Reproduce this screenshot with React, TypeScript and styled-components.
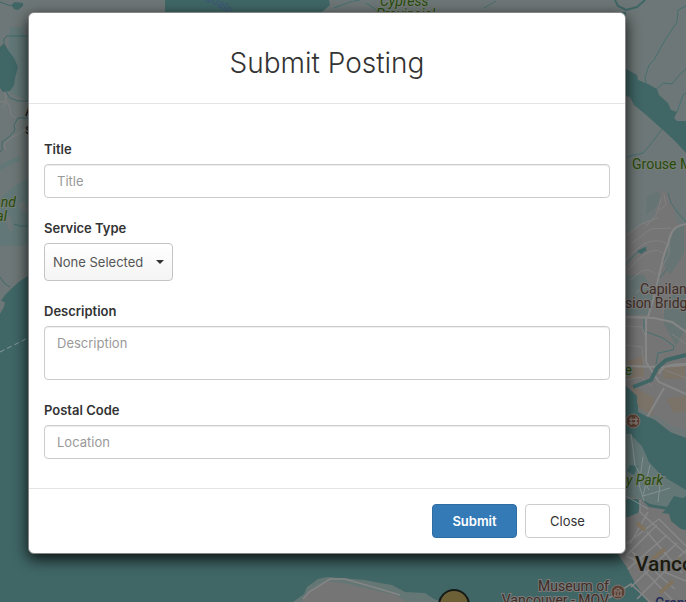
import React from "react";
import styled, { createGlobalStyle } from "styled-components";

const GlobalStyle = createGlobalStyle`
  *, *::before, *::after { box-sizing: border-box; }
  body {
    margin: 0;
    background: #406666;
    color: #333;
    font-family: Inter, "Liberation Sans", sans-serif;
    font-size: 13px;
    line-height: 20px;
  }
`;

const Page = styled.main`
  position: relative;
  min-height: 100vh;
  overflow: hidden;
  display: flex;
  align-items: flex-start;
`;

const MapCanvas = styled.svg`
  position: absolute;
  top: 0;
  left: 0;
  width: 100%;
  height: 100%;
  font-family: Roboto, sans-serif;
  font-size: 14px;
`;

const Dialog = styled.form`
  position: relative;
  flex: 1;
  margin: 12px 60px 48px 28px;
  background: #fff;
  border: 1px solid #858585;
  border-radius: 6px;
  box-shadow: 0 5px 15px rgba(0, 0, 0, 0.85);
`;

const Header = styled.header`
  padding: 30px 16px 20px;
  border-bottom: 1px solid #e5e5e5;
  text-align: center;
`;

const Heading = styled.h1`
  margin: 0;
  font-size: 28px;
  font-weight: 300;
  line-height: 40px;
`;

const Body = styled.div`
  display: flex;
  flex-direction: column;
  gap: 20px;
  padding: 35px 15px 29px;
`;

const Field = styled.div`
  display: flex;
  flex-direction: column;
  align-items: flex-start;
  gap: 5px;
`;

const Label = styled.label`
  font-weight: 600;
`;

const TextInput = styled.input`
  width: 100%;
  height: 34px;
  padding: 6px 12px;
  border: 1px solid #ccc;
  border-radius: 4px;
  box-shadow: inset 0 1px 1px rgba(0, 0, 0, 0.075);
  font: inherit;
  color: #555;
  &::placeholder { color: #999; opacity: 1; }
`;

const TextArea = styled(TextInput).attrs({ as: "textarea" })`
  display: block;
  height: 54px;
  resize: none;
`;

const SelectBox = styled.div`
  position: relative;
`;

const Select = styled.select`
  appearance: none;
  display: block;
  height: 38px;
  padding: 0 28px 0 8px;
  border: 1px solid #c4c4c4;
  border-radius: 4px;
  background: linear-gradient(#fff, #f4f4f4);
  font: inherit;
  color: #555;
`;

const Caret = styled.svg`
  position: absolute;
  top: 17px;
  right: 9px;
  width: 8px;
  height: 4px;
  pointer-events: none;
`;

const Footer = styled.footer`
  display: flex;
  justify-content: flex-end;
  gap: 8px;
  padding: 15px;
  border-top: 1px solid #e5e5e5;
`;

const Button = styled.button<{ $primary?: boolean }>`
  width: 85px;
  height: 34px;
  padding: 0;
  border: 1px solid ${(p) => (p.$primary ? "#2e6da4" : "#ccc")};
  border-radius: 4px;
  background: ${(p) => (p.$primary ? "#337ab7" : "#fff")};
  color: ${(p) => (p.$primary ? "#fff" : "#333")};
  font: inherit;
  font-weight: ${(p) => (p.$primary ? 600 : 400)};
`;

const CityMap = () => (
  <MapCanvas viewBox="0 0 686 602" preserveAspectRatio="xMinYMin slice" aria-hidden="true">
    <rect width="686" height="602" fill="#406666" />

    {/* western shore */}
    <path d="M0 0H165V12H60V260L28 276 20 281 12 288 5 295 1 301 5 302 4 307 0 314Z" fill="#6e7777" />
    <path d="M10 27H23V34L28 38V101L18 96 10 93 18 67 8 50Z" fill="#627777" />
    <path d="M0 165L8 161 20 156 20 161 10 165 0 170ZM0 200L10 190 18 184 28 178V246H0Z" fill="#627777" />
    <path d="M7 215l4 2 2 12-3 3-4-9ZM18 205l6-4 4 12-5-2Z" fill="#6e7777" />
    <path d="M4 43L8 50 14 58 18 67 15 78 14 85 10 91 3 92 0 88V47ZM11 5L15 2 23 3 23 6 18 10 14 9Z" fill="#406666" />
    <path d="M0 2L11 6M4 43V39L7 36H28M6 92L10 98 18 101H28M28 118H18L14 125 15 130 9 137 2 142 2 150 0 152M14 224L20 226 28 226M0 277L4 283 10 287" fill="none" stroke="#406a6a" />
    <path d="M5 92L6 101 10 107 11 115 16 118M28 127L20 133 9 139 4 145 6 150M0 102L4 101 5 105 2 107" fill="none" stroke="#7f7f7f" />
    <path d="M0 352L28 338" stroke="#849b9b" strokeDasharray="5 3" />

    {/* northern mountains */}
    <path d="M322 12L330 5 329 0H686V121H626V12Z" fill="#6e7777" />
    <path d="M334 8L350 2 360 0M366 3l8 5 4 4M484 8l12-7" fill="none" stroke="#467070" />
    <path d="M615 0L618 6 626 10 637 7 645 0" fill="none" stroke="#406666" strokeWidth="2" />

    {/* north shore */}
    <path d="M620 90H686V438L670 432 656 422 638 412V397L626 395H610Z" fill="#6e7777" />
    <path d="M610 244L630 231 654 219 660 190 672 195 676 222 686 226V430L670 425 650 412 640 395H610Z" fill="#757575" />
    <path d="M675 228L684 225V252L680 260 670 275 663 263 668 246ZM646 215L647 196 657 191 661 194 658 205ZM626 275h18l10 16-6 24h-22ZM664 300l22-12v40l-10 18-12-22Z" fill="#667574" />
    <path d="M627 361l17-5v22l-18 1ZM663 365h22v14h-22ZM630 385l24 13-1 18-14-8ZM666 399l20-3v15l-12 2Z" fill="#7b7268" />
    <path d="M626 69L637 75 638 80 648 84 657 89 659 95 668 103 671 110 677 112 674 118 677 121H686V153L675 141 662 129 645 114 634 105 630 97 626 96Z" fill="#406666" />
    <path d="M646 83L645 77 649 65 654 60 665 40 677 22 678 10 686 6M657 89L663 83 672 84 680 74 686 69M677 112L683 95 686 93M662 129L650 145 643 153 626 157M668 193L671 203 678 213 686 222M626 265L632 257 641 250 647 247M667 269L658 280V297L641 303M644 318V331L655 335 663 338 674 346 673 350 658 353 656 364" fill="none" stroke="#457070" />
    <path d="M637 251l8-4 2 3-6 4Z" fill="#406666" />
    <path d="M626 236l15-12 17-6M631 244l20-15 20-1M626 260q22-26 40-17M628 270q24-28 36-16M631 280q15-17 25-5M636 293q10-12 23 1M646 226l11-12 4-16M669 236v18l-11 20M659 210l7-5-2-10M626 326l16 1 4 11v26M672 290l-10 23M626 345l16 2 2 20M665 370l21 8M626 380l15-3 12 10M672 334l14 10" fill="none" stroke="#818181" />
    <path d="M626 317l28 1 18 4 14 10M646 319v43l13 20 27 12M626 366l34 1 26-2M664 388l-26 45M686 364q-24-1-27 10M686 224q-12 2-15 10l-8 24-8 35-7 24" fill="none" stroke="#868686" strokeWidth="2" />
    <path d="M686 355l-20 5-9 8-6 12-18 7" fill="none" stroke="#406666" strokeWidth="4" />
    <path d="M626 386L637 396V412L655 420 674 435 686 438V494L674 482 659 471 650 452 640 443 626 429Z" fill="#406666" />

    {/* peninsula */}
    <path d="M610 432L630 434 642 446 649 462 661 475 686 490V499L674 496 667 507 650 504 643 500 610 496Z" fill="#637776" />
    <path d="M600 496L640 498 649 507 668 510 671 521 681 529 686 530V602H648L636 585 626 566 617 553H600Z" fill="#757575" />
    <path d="M610 499h28l3 5-3 9-13 5-15 4ZM662 513l6-6 6 5 2-8 10-8v34l-7-3-8-13ZM630 465l8 1-4 9-7-4Z" fill="#406666" />
    <path d="M631 434l4 31 14 25M643 457l-4 28 5 16M650 465l-7 31 27-8M626 496l22 13M661 475l-3 27" fill="none" stroke="#849292" />
    <path d="M640 500v12l46 42M686 546l-27-27-33 25M626 556l60 25M648 512l-18 32M647 532l35 41M657 525l-30 30M667 535l-39 34M677 543l-46 44M686 550l-49 49M634 560l40 42M630 550l45 39" fill="none" stroke="#878787" strokeWidth="1.5" />
    <path d="M637 523l8 7M650 561l15-12M668 571l12-13M660 593l13-12" stroke="#7f7360" strokeWidth="4" />

    {/* southern point */}
    <path d="M293 602L304 594 307 587 318 579 327 577 365 580 380 583 392 585 405 592 425 593 434 599 442 602Z" fill="#657775" />
    <path d="M302 602L308 592 325 581 343 583 395 595 407 602Z" fill="#757575" />
    <path d="M303 599L309 592 330 579H345L380 589 400 595M650 602l-19-18-22 14" fill="none" stroke="#858585" strokeWidth="1.5" />
    <circle cx="454" cy="605" r="15" fill="#6c6136" stroke="#171b18" strokeWidth="2" />

    {/* place names */}
    <g fontStyle="italic" fill="#294b0b" stroke="#747e75" strokeWidth="2" paintOrder="stroke">
      <text x="16" y="207" textAnchor="end">nd</text>
      <text x="7" y="221" textAnchor="end">al</text>
      <text x="380" y="6">Cypress</text>
      <text x="376" y="19">Provincial</text>
      <text x="626" y="485">y Park</text>
    </g>
    <g fill="#294b0b" stroke="#757d78" strokeWidth="2" paintOrder="stroke">
      <text x="632" y="169">Grouse Mountain</text>
      <text x="632" y="375" textAnchor="end">e</text>
    </g>
    <g fill="#402c24" stroke="#7b7b7b" strokeWidth="2" paintOrder="stroke">
      <text x="640" y="294">Capilano</text>
      <text x="625" y="308">sion Bridge</text>
      <text x="609" y="591" textAnchor="end">Museum of</text>
      <text x="609" y="605" textAnchor="end">Vancouver - MOV</text>
    </g>
    <text x="635" y="571" fontSize="21" fontWeight="500" fill="#1c1b10" stroke="#777" strokeWidth="2" paintOrder="stroke">Vancouver</text>
    <text x="655" y="608" fontWeight="500" fill="#242c58">Granville</text>
    <text x="205" y="-2" fontSize="12" fill="#3d5878" transform="rotate(34 205 -2)">gdale</text>
    <g fill="#111"><text x="25" y="116">A</text><text x="25" y="134">s</text></g>

    {/* landmark pins */}
    <g stroke="#7e7772">
      <circle cx="633" cy="421" r="7" fill="#5c4034" />
      <circle cx="618" cy="592" r="7" fill="#5c4034" />
    </g>
    <path d="M631 417v8M636 417v8M629 423h9M629 419q2 2 4 0 3 2 5 0M614 591l4-3 4 3ZM615 592v4M621 592v4M614 596h8M618 592v3" fill="none" stroke="#8d8580" />
  </MapCanvas>
);

export default function App() {
  return (
    <>
      <GlobalStyle />
      <Page>
        <CityMap />
        <Dialog aria-labelledby="dialog-title" onSubmit={(e: React.FormEvent) => e.preventDefault()}>
          <Header>
            <Heading id="dialog-title">Submit Posting</Heading>
          </Header>
          <Body>
            <Field>
              <Label htmlFor="title">Title</Label>
              <TextInput id="title" type="text" placeholder="Title" />
            </Field>
            <Field>
              <Label htmlFor="service">Service Type</Label>
              <SelectBox>
                <Select id="service">
                  <option>None Selected</option>
                </Select>
                <Caret viewBox="0 0 8 4" aria-hidden="true">
                  <path d="M0 0h8L4 4Z" fill="#333" />
                </Caret>
              </SelectBox>
            </Field>
            <Field>
              <Label htmlFor="description">Description</Label>
              <TextArea id="description" placeholder="Description" />
            </Field>
            <Field>
              <Label htmlFor="postal">Postal Code</Label>
              <TextInput id="postal" type="text" placeholder="Location" />
            </Field>
          </Body>
          <Footer>
            <Button type="submit" $primary>Submit</Button>
            <Button type="button">Close</Button>
          </Footer>
        </Dialog>
      </Page>
    </>
  );
}
